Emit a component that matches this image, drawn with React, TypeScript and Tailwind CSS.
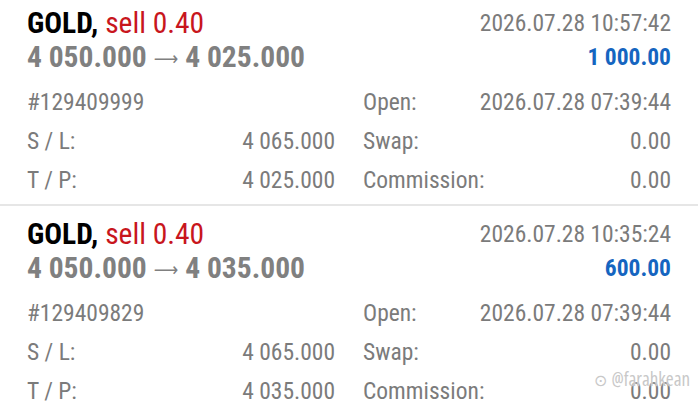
import React from 'react';

type Deal = {
  symbol: string;
  side: string;
  priceOpen: string;
  priceClose: string;
  time: string;
  profit: string;
  ticket: string;
  open: string;
  sl: string;
  tp: string;
  swap: string;
  commission: string;
};

const deals: Deal[] = [
  {
    symbol: 'GOLD',
    side: 'sell 0.40',
    priceOpen: '4 050.000',
    priceClose: '4 025.000',
    time: '2026.07.28 10:57:42',
    profit: '1 000.00',
    ticket: '#129409999',
    open: '2026.07.28 07:39:44',
    sl: '4 065.000',
    tp: '4 025.000',
    swap: '0.00',
    commission: '0.00',
  },
  {
    symbol: 'GOLD',
    side: 'sell 0.40',
    priceOpen: '4 050.000',
    priceClose: '4 035.000',
    time: '2026.07.28 10:35:24',
    profit: '600.00',
    ticket: '#129409829',
    open: '2026.07.28 07:39:44',
    sl: '4 065.000',
    tp: '4 035.000',
    swap: '0.00',
    commission: '0.00',
  },
];

function Row({ label, value }: { label: string; value: string }) {
  return (
    <div className="flex items-center justify-between h-[39px]">
      <span>{label}</span>
      <span>{value}</span>
    </div>
  );
}

function DealCard({ deal, first }: { deal: Deal; first?: boolean }) {
  return (
    <div className={first ? '-mt-[5px] pt-[12px] pb-[4px] px-[27px]' : 'pt-[12px] pb-[6px] px-[27px]'}>
      {/* заголовок */}
      <div className="flex items-center justify-between h-[34px]">
        <div className="font-bold text-black text-[29.5px]">
          {deal.symbol}, <span className="font-normal text-[#c8161d]">{deal.side}</span>
        </div>
        <div className="text-[#7b7b7b]">{deal.time}</div>
      </div>
      <div className="flex items-center justify-between h-[34px] font-bold">
        <div className="text-[#808080] text-[29.5px] flex items-center">
          <span>{deal.priceOpen}</span>
          <span className="font-normal mx-[7px] text-[19px]" style={{ fontFamily: '"DejaVu Sans", sans-serif' }}>
            ⟶
          </span>
          <span>{deal.priceClose}</span>
        </div>
        <div className="text-[#1565c0]">{deal.profit}</div>
      </div>

      {/* детали */}
      <div className="grid grid-cols-2 gap-x-[28px] mt-[8px] text-[#7b7b7b]">
        <div>
          <div className="flex items-center h-[39px]">{deal.ticket}</div>
          <Row label="S / L:" value={deal.sl} />
          <Row label="T / P:" value={deal.tp} />
        </div>
        <div>
          <Row label="Open:" value={deal.open} />
          <Row label="Swap:" value={deal.swap} />
          <Row label="Commission:" value={deal.commission} />
        </div>
      </div>
    </div>
  );
}

export default function App() {
  return (
    <div
      className="relative w-[698px] h-[412px] overflow-hidden bg-white text-[23.5px] leading-none font-stretch-condensed"
      style={{ fontFamily: '"Roboto Condensed", Roboto, "Liberation Sans Narrow", sans-serif' }}
    >
      <DealCard deal={deals[0]} first />
      <div className="h-[2px] bg-[#e6e6e6]" />
      <DealCard deal={deals[1]} />

      {/* водяной знак */}
      <div
        className="absolute right-[8px] top-[370px] flex items-center gap-[5px] text-[19px] text-[#c8c8c8]"
        style={{ fontFamily: '"Open Sans", sans-serif', textShadow: '0 0 2px #fff' }}
      >
        <span className="text-[16px]">⊙</span>
        <span>@farahkean</span>
      </div>
    </div>
  );
}
